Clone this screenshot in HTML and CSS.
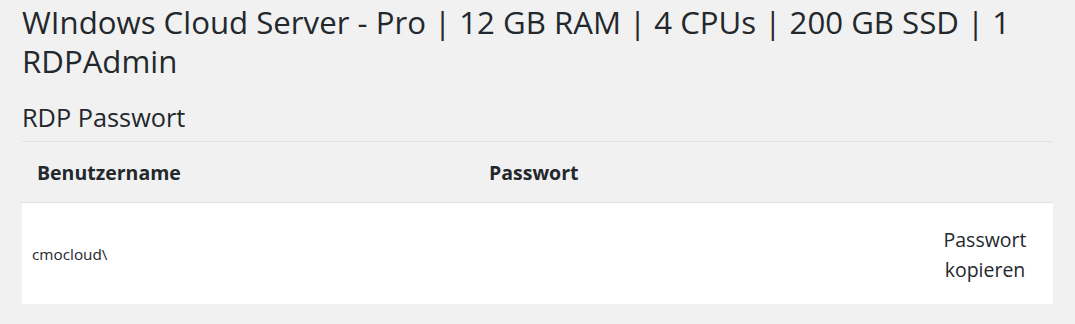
FILE: index.html
```html
<!DOCTYPE html>
<html lang="de">
<head>
<meta charset="utf-8">
<link rel="stylesheet" href="styles.css">
</head>
<body>
<div class="page">
  <h1 class="title">WIndows Cloud Server - Pro | 12 GB RAM | 4 CPUs | 200 GB SSD | 1 RDPAdmin</h1>
  <h2 class="subtitle">RDP Passwort</h2>
  <table class="creds">
    <colgroup>
      <col class="c-user">
      <col class="c-pass">
      <col class="c-act">
    </colgroup>
    <thead>
      <tr>
        <th>Benutzername</th>
        <th>Passwort</th>
        <th></th>
      </tr>
    </thead>
    <tbody>
      <tr>
        <td class="user">cmocloud\</td>
        <td></td>
        <td class="act"><a class="copy">Passwort kopieren</a></td>
      </tr>
    </tbody>
  </table>
</div>
</body>
</html>
```

FILE: styles.css
```css
html, body {
  margin: 0;
  padding: 0;
  background: #f1f1f1;
}
body {
  font-family: "Open Sans", "Noto Sans", sans-serif;
  color: #23282d;
}
.page {
  padding: 3px 22px 0 22px;
}
.title {
  margin: 0;
  font-size: 31.2px;
  font-weight: 400;
  line-height: 39px;
  color: #23282d;
}
.subtitle {
  margin: 20px 0 0 0;
  font-size: 25.3px;
  font-weight: 400;
  line-height: 32px;
  padding-bottom: 8px;
  color: #23282d;
}
.creds {
  width: 100%;
  table-layout: fixed;
  border-collapse: collapse;
  border-top: 1px solid #e2e2e2;
}
.c-user { width: 452px; }
.c-act { width: 136px; }
.creds th {
  text-align: left;
  font-size: 19.5px;
  font-weight: 700;
  line-height: 26px;
  padding: 18px 15px 16px 15px;
  border-bottom: 1px solid #e2e2e2;
}
.creds tbody tr {
  background: #fff;
}
.creds td {
  height: 101px;
  padding: 0 10px;
  vertical-align: middle;
}
.user {
  font-size: 15.3px;
}
.creds td.act {
  text-align: center;
  padding: 0;
}
.copy {
  display: inline-block;
  padding-top: 3px;
  font-size: 19.5px;
  line-height: 30px;
  color: #23282d;
}
```
